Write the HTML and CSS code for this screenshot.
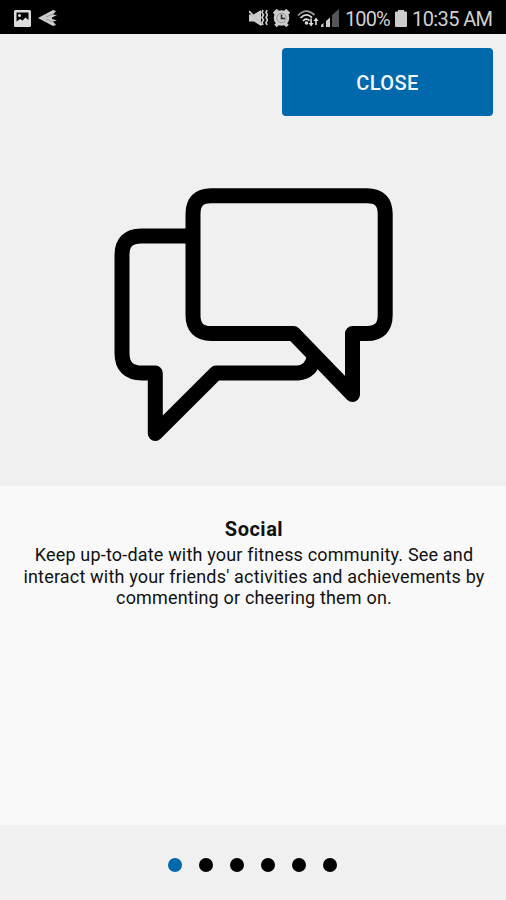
FILE: index.html
```html
<!DOCTYPE html>
<html lang="en">
<head>
    <meta charset="UTF-8">
    <meta name="viewport" content="width=device-width, initial-scale=1.0">
    <title>Social</title>
    <link rel="stylesheet" href="styles.css">
</head>
<body>

    <header class="status-bar">
        <svg class="icon-picture" width="17" height="17" viewBox="0 0 17 17">
            <path fill="#ddd" fill-rule="evenodd" d="M1.500 0h14A1.500 1.500 0 0 1 17 1.500v14a1.500 1.500 0 0 1-1.500 1.500h-14A1.500 1.500 0 0 1 0 15.500v-14A1.500 1.500 0 0 1 1.500 0zM2.500 2.500v9l3.500-2.500 2.500 1.500 3-3 3 2.500V2.500z"/>
            <circle cx="5.500" cy="5.500" r="1.500" fill="#ddd"/>
        </svg>
        <svg class="icon-plane" width="19" height="16" viewBox="0 0 19 16">
            <path fill="#ccc" d="M0 8L15 0l3 1-3 3.500 4 .5-5 2.500V9l5 1.500-4 1L18 15l-3 1z"/>
            <path fill="none" stroke="#888" stroke-width=".7" d="M8 7l7-3M8 9l7 3"/>
        </svg>

        <svg class="icon-mute" width="19" height="18" viewBox="0 0 19 18">
            <path fill="#ccc" d="M0 5.500h4.500L12 1v16l-7-4.500H0z"/>
            <path fill="none" stroke="#444" stroke-width="1" d="M2 3.500l11 12"/>
            <path fill="none" stroke="#ccc" stroke-width="1.800" d="M0 2l13 14"/>
            <path fill="none" stroke="#ccc" stroke-width="1.700" d="M14 1l-1 2.500L14.500 6 13 8.500l1.500 2.500-1.500 2.500 1 2.500M18 1l-1 2.500L18.500 6 17 8.500l1.500 2.500-1.500 2.500 1 2.500"/>
        </svg>
        <svg class="icon-alarm" width="17" height="18" viewBox="0 0 17 18">
            <path fill="none" stroke="#ccc" stroke-width="3.500" d="M1 5l4-4M16 5l-4-4M2.500 17l3-3M14.500 17l-3-3"/>
            <circle cx="8.500" cy="9" r="7.800" fill="#ccc"/>
            <circle cx="8.500" cy="9" r="4.700" fill="none" stroke="#888" stroke-width=".8"/>
            <path fill="none" stroke="#222" stroke-width="1.500" d="M8.500 5.500V9.500H12"/>
        </svg>
        <svg class="icon-wifi" width="22" height="18" viewBox="0 0 22 18">
            <path fill="none" stroke="#999" stroke-width="1.800" d="M1 6.500Q9 -2 17.500 6"/>
            <path fill="none" stroke="#ddd" stroke-width="1.800" d="M3.500 9Q9 3 15 8.500M6 12Q9 8.500 12.500 11.500"/>
            <circle cx="9.500" cy="14" r="1.800" fill="#ddd"/>
            <path fill="#ddd" d="M13.300 9.500h1.600v4.500h1.800l-2.600 3.500-2.600-3.500h1.800zM18.200 16h1.600v-4h1.800L19 8.500 16.400 12h1.800z"/>
        </svg>
        <svg class="icon-signal" width="18" height="18" viewBox="0 0 18 18">
            <path fill="#555" d="M11 6L18 0v18h-7z"/>
            <path fill="#ccc" d="M0 18v-2l2.500-2v4zM5 18v-6L9 8.500V18z"/>
        </svg>
        <span class="battery-text">100%</span>
        <svg class="icon-battery" width="12" height="17" viewBox="0 0 12 17">
            <path fill="#ccc" d="M3 0h6v1.500h2a1 1 0 0 1 1 1V16a1 1 0 0 1-1 1H1a1 1 0 0 1-1-1V2.500a1 1 0 0 1 1-1h2z"/>
        </svg>
        <span class="time">10:35 AM</span>
    </header>

    <section class="hero">
        <button class="close-btn">CLOSE</button>
        <svg class="chat-icon" width="280" height="254" viewBox="114 188 280 254">
            <!-- back bubble -->
            <path d="M193 235.900H141Q122 236 122 255V353Q122 373 142 373H155.300V433.500L216 373H298Q311 372 314 358"/>
            <!-- front bubble -->
            <path d="M211 195.700H367Q385.200 195.700 385.200 214V315Q385.200 333.500 367 333.500H352.500V394.500L293.500 333.500H211Q193 333.500 193 315V214Q193 195.700 211 195.700Z"/>
        </svg>
    </section>

    <main class="content">
        <h1>Social</h1>
        <p>Keep up-to-date with your fitness community. See and<br>
        interact with your friends' activities and achievements by<br>
        commenting or cheering them on.</p>
    </main>

    <footer class="dots">
        <span class="dot active"></span>
        <span class="dot"></span>
        <span class="dot"></span>
        <span class="dot"></span>
        <span class="dot"></span>
        <span class="dot"></span>
    </footer>

</body>
</html>
```
FILE: styles.css
```css
* {
    box-sizing: border-box;
}
body {
    display: flex;
    flex-direction: column;
    height: 900px;
    margin: 0;
    font-family: Roboto, "Liberation Sans", sans-serif;
    background: #f0f0f0;
    color: #111;
}
.status-bar {
    display: flex;
    align-items: center;
    height: 34px;
    padding: 2px 13px 0 14px;
    background: #000;
    color: #d0d0d0;
    font-size: 20px;
    white-space: nowrap;
}
.status-bar svg {
    flex: none;
}
.icon-plane {
    margin-left: 7px;
}
.icon-mute {
    margin-left: auto;
}
.icon-alarm {
    margin-left: 5px;
}
.icon-wifi {
    margin-left: 7px;
}
.icon-signal {
    margin-left: 2px;
}
.battery-text {
    width: 46px;
    margin-left: 6px;
    padding-top: 1px;
    letter-spacing: -0.9px;
}
.icon-battery {
    margin-left: 4px;
}
.time {
    width: 81px;
    margin-left: 5px;
    padding-top: 1px;
    letter-spacing: -0.6px;
}
.hero {
    display: flex;
    flex-direction: column;
    height: 452px;
    padding: 14px 13px 0;
}
.close-btn {
    align-self: flex-end;
    width: 211px;
    height: 68px;
    padding: 2px 0 0;
    border: none;
    border-radius: 4px;
    background: #0069ac;
    color: #f2f8fc;
    font-family: inherit;
    font-size: 20px;
    font-weight: 500;
    letter-spacing: 0.4px;
}
.chat-icon {
    align-self: center;
    margin: 72px 0 0 2px;
    fill: none;
    stroke: #000;
    stroke-width: 15;
    stroke-linejoin: round;
}
.content {
    height: 339px;
    padding: 31px 0 0 2px;
    background: #f9f9f9;
    text-align: center;
}
h1 {
    margin: 0;
    font-size: 20px;
    font-weight: 700;
    line-height: 24px;
    letter-spacing: 0.5px;
}
p {
    margin: 3px 0 0;
    font-size: 18px;
    line-height: 21.5px;
    letter-spacing: 0.18px;
    white-space: nowrap;
}
.dots {
    display: flex;
    justify-content: center;
    gap: 17px;
    padding: 33px 2px 0 0;
}
.dot {
    width: 14px;
    height: 14px;
    border-radius: 50%;
    background: #000;
}
.dot.active {
    background: #0069ac;
}
```
